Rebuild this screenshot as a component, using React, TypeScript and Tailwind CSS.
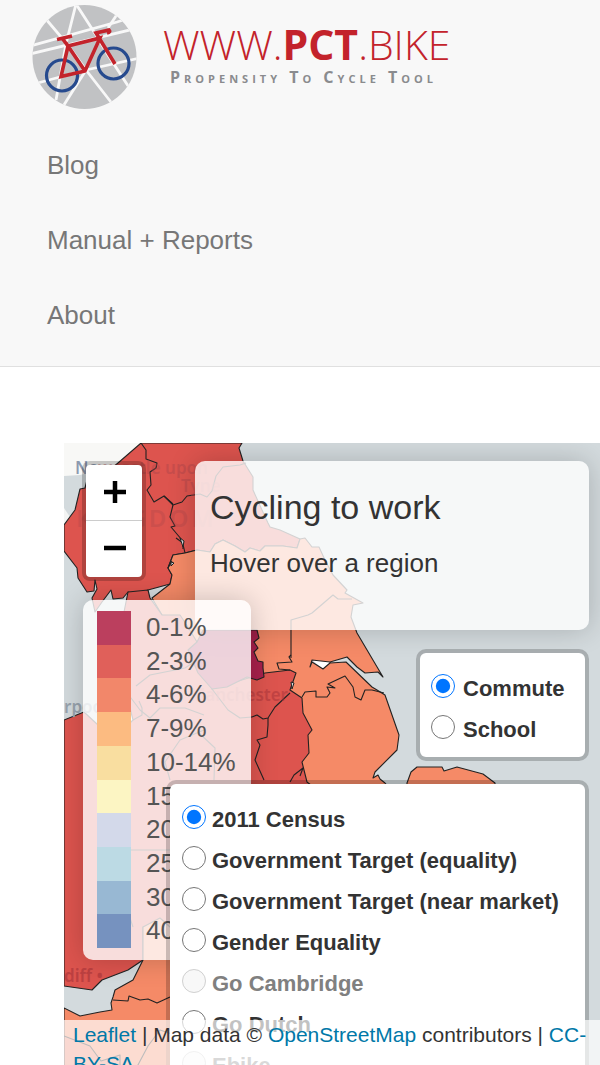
import React, { useState } from 'react';

const navLinks = ['Blog', 'Manual + Reports', 'About'];

const legendItems = [
  { label: '0-1%', color: 'bg-[#bb3f5e]' },
  { label: '2-3%', color: 'bg-[#e0605a]' },
  { label: '4-6%', color: 'bg-[#f2876a]' },
  { label: '7-9%', color: 'bg-[#fcbb81]' },
  { label: '10-14%', color: 'bg-[#f9dea0]' },
  { label: '15-19%', color: 'bg-[#fcf5c3]' },
  { label: '20-24%', color: 'bg-[#d3d9ea]' },
  { label: '25-29%', color: 'bg-[#bcdae4]' },
  { label: '30-39%', color: 'bg-[#98b8d3]' },
  { label: '40%+', color: 'bg-[#7692bf]' },
];

const purposes = [{ label: 'Commute' }, { label: 'School' }];

const scenarios = [
  { label: '2011 Census' },
  { label: 'Government Target (equality)' },
  { label: 'Government Target (near market)' },
  { label: 'Gender Equality' },
  { label: 'Go Cambridge', disabled: true },
  { label: 'Go Dutch' },
  { label: 'Ebike', disabled: true },
];

const LogoMark = () => (
  <svg viewBox="0 0 130 120" className="w-[130px] h-[120px]" aria-hidden="true">
    <defs>
      <clipPath id="disc">
        <circle cx="64.5" cy="57" r="52" />
      </clipPath>
    </defs>
    <circle cx="64.5" cy="57" r="52" fill="#c1c2c4" />
    <g clipPath="url(#disc)" stroke="#f8f8f8" strokeWidth="2.8" fill="none">
      <path d="M10 46L97 22L116 16" />
      <path d="M10 54L118 28" />
      <path d="M56 4L46 44L36 100" />
      <path d="M56 4L76 35L88 55L112 92" />
      <path d="M25 18L48 45L66 70L94 106" />
      <path d="M100 10L88 28" />
      <path d="M14 84L66 70L120 58" />
      <path d="M66 70L42 108" />
    </g>
    <g fill="none" stroke="#264a8e" strokeWidth="3.2">
      <circle cx="42" cy="75.500" r="15.500" />
      <circle cx="93.500" cy="63.500" r="15.500" />
    </g>
    <path
      d="M37 39.500L52 36M42 38L48 46L80 38L65 71L41 76.500L48 46L65 71M95 64L76 33L89 30Q91 32 87 33"
      fill="none"
      stroke="#c3232b"
      strokeWidth="3.6"
    />
  </svg>
);

const Logo = () => (
  <a href="#home" className="flex h-[128px] pl-5">
    <LogoMark />
    <span className="flex flex-col pt-[22px] pl-[13px] font-['Open_Sans',sans-serif]">
      <span className="text-[41px] leading-[44px] font-light text-[#c3232b] whitespace-nowrap">
        WWW.<b className="font-bold">PCT</b>.BIKE
      </span>
      <span className="pl-[7px] text-[16px] leading-[22px] font-bold text-[#8a8b8e] tracking-[4px] whitespace-nowrap [font-variant:small-caps]">
        Propensity To Cycle Tool
      </span>
    </span>
  </a>
);

const RegionMap = () => (
  <svg
    viewBox="64 443 536 635"
    preserveAspectRatio="xMinYMin slice"
    className="absolute inset-0 w-full h-full bg-[#d3dadd]"
    aria-hidden="true"
  >
    {/* base map land */}
    <path d="M64 443H170V500L120 490L100 470L80 475L64 476Z" fill="#f8f8f6" />
    <path d="M64 508L72 520L64 530Z" fill="#f3f4f3" />
    <path d="M84 712L104 730L112 700L135 718L130 740L90 735Z" fill="#f8f8f6" />
    <path d="M311 659L332 662L323 669Z" fill="#fff" />

    <g stroke="#222" strokeWidth="1.100" strokeLinejoin="round">
      {/* north west and north east */}
      <path
        fill="#dd544e"
        d="M141 443H242L239 448L243 461L253 477V490L262 510L268 523L270 527L280 530L300 539L297 548L283 546H265L260 551L250 548L245 552L235 546L223 540L215 544L210 552L197 550L185 553L173 555L168 568L172 575L170 584L148 590L140 596L128 592L123 598L113 599L111 590L102 602L95 612L92 598L97 589L95 580L94 591L87 592L78 578L77 568L64 551V525L75 510L80 489L85 488L88 476L104 475L118 463Z"
      />
      {/* yorkshire */}
      <path
        fill="#f58a67"
        d="M185 553L197 550L210 552L215 544L223 540L235 546L245 552L250 548L260 551L265 546H283L297 548L300 539L305 538L312 547H319L325 560L333 575L347 590L345 593L363 603L353 605L351 617L357 633L383 677L378 672L365 673L357 667L347 657L330 662L312 660L310 667L312 662L323 669L330 663L346 662L372 687L377 690L385 695L399 735L397 750L375 772L373 778L378 775L380 779L385 783L400 800H255L150 660L162 615L152 598L170 584L172 575L168 568L173 555Z"
      />
      {/* north west down to the midlands */}
      <path
        fill="#dd544e"
        d="M128 592L148 590L150 598L162 615L180 615L188 627L197 642L212 689L265 673L290 670L296 673L290 690L302 698L303 713L312 730L308 735L309 753L302 762L307 782L330 800V930L143 927L143 960L128 970L102 980L92 990L64 986V720L84 712L98 725L115 738L133 720L128 700L108 670L105 653L110 630L123 617Z"
      />
      <path
        fill="#a8214c"
        d="M203 630L257 630L259 638L254 642L258 648L254 652L258 661L263 662V668L264 677L257 680L247 677L227 687L212 689L198 673L188 650L197 642Z"
      />
      {/* east anglia */}
      <path fill="#f58a67" d="M407 783L411 772L417 767H442L444 771L457 767L483 774L495 783V1000H407Z" />
      {/* south west */}
      <path
        fill="#f58a67"
        d="M143 927L160 918L170 927H330V1080H64V1008L80 1016L100 1012L112 1010L111 1003L113 997L115 990L133 980L143 960Z"
      />
      <path fill="#e97d66" d="M64 1036L90 1046L101 1061L120 1055V1080H64Z" />
    </g>

    {/* inner boundaries */}
    <g fill="none" stroke="#222" strokeWidth="1.100" strokeLinejoin="round">
      <path d="M141 443L146 450V459L157 463L156 468L150 472L151 485L147 490L154 502L164 496L173 505L182 502L187 496L200 494L207 497L212 491L216 476L223 467L240 465L246 463" />
      <path d="M173 505L170 517L175 526L171 527L182 540L185 553" />
      <path d="M164 496L173 504M176 538L183 543V549M172 561L168 568" />
      <path d="M291 658V620L308 615L312 613L333 595L338 599L352 599" />
      <path d="M291 655L289 657L292 662L277 663L279 669L290 670" />
      <path d="M302 697L305 692L316 691V697L327 697L330 693L327 687L335 688L328 684L345 676L353 687L355 697L361 700L365 690H372L384 693" />
      <path d="M252 717L257 715L263 719L268 718L275 707L290 693" />
      <path d="M268 718V725L267 737L257 740L260 745L255 760L264 780" />
      <path d="M290 782L294 775L303 768L300 776" />
      <path d="M105 653L118 665L125 690L140 710L150 718L160 708H185L204 715" />
      <path d="M136 686L150 675L185 668L197 660" />
      <path d="M212 689L228 710L240 718L252 717" />
      <path d="M133 720L142 715V708L139 701" />
      <path d="M199 733L215 748L214 780M170 780L165 762L180 740L204 730" />
      <path d="M112 740L118 765L106 800L98 840L108 845L130 850L170 850" />
      <path d="M105 850L112 870L106 900L130 918L133 927" />
      <path d="M113 1000L128 1001L129 996L140 1000L148 999L157 1003L170 997" />
      <path d="M130 1080L148 1046L160 1030L175 1035" />
    </g>
    <path d="M180 538L184 541L183 547ZM171 562L174 563L171 566ZM291 682L292 689L294 683Z" fill="#d3dadd" stroke="#222" />

    {/* place names showing through the fills */}
    <g fontFamily="'Noto Sans', sans-serif" fontWeight="600">
      <text x="75" y="474" fontSize="17" fill="#8d9ab0">Ne</text>
      <text x="98" y="474" fontSize="17" fill="#a8444a" opacity=".4">wcastle upon</text>
      <text x="181" y="492" fontSize="17" fill="#a8444a" opacity=".4">Tyne</text>
      <text x="76" y="527" fontSize="24" letterSpacing="3" fill="#a8444a" opacity=".3">KINGDOM</text>
      <text x="64" y="713" fontSize="17" fill="#98a3ad">rpool</text>
      <text x="288" y="701" fontSize="17" textAnchor="end" fill="#a8343a" opacity=".5">Manchester</text>
      <text x="64" y="982" fontSize="17" fill="#a8343a" opacity=".6">diff •</text>
    </g>
  </svg>
);

interface RadioPanelProps {
  name: string;
  items: { label: string; disabled?: boolean }[];
  className: string;
  gap: string;
}

const RadioPanel = ({ name, items, className, gap }: RadioPanelProps) => {
  const [selected, setSelected] = useState(items[0].label);
  return (
    <fieldset
      className={`relative z-30 flex flex-col pt-[15px] pb-[7px] bg-white bg-clip-padding border-4 border-black/20 rounded-[10px] ${className}`}
    >
      {items.map((item) => (
        <label
          key={item.label}
          className={`flex items-center h-[41px] text-[22px] font-bold whitespace-nowrap ${gap} ${
            item.disabled ? 'text-[#808080]' : 'text-[#333]'
          }`}
        >
          <input
            type="radio"
            name={name}
            className="w-6 h-6 mb-1.5 shrink-0"
            checked={selected === item.label}
            disabled={item.disabled}
            onChange={() => setSelected(item.label)}
          />
          {item.label}
        </label>
      ))}
    </fieldset>
  );
};

const ZoomControl = () => (
  <div className="flex flex-col ml-[-1px] overflow-hidden bg-white bg-clip-padding border-4 border-black/20 rounded-lg w-16">
    <button aria-label="Zoom in" className="flex items-center justify-center pb-0.5 pl-0.5 border-b border-[#ccc] h-14">
      <svg viewBox="0 0 22 22" className="w-[22px] h-[22px]">
        <path d="M11 0V22M0 11H22" stroke="#000" strokeWidth="4.500" />
      </svg>
    </button>
    <button aria-label="Zoom out" className="flex items-center justify-center pb-0.5 pl-0.5 h-14">
      <svg viewBox="0 0 22 22" className="w-[22px] h-[22px]">
        <path d="M0 11H22" stroke="#000" strokeWidth="4.500" />
      </svg>
    </button>
  </div>
);

const Legend = () => (
  <ul className="relative z-20 flex flex-col w-[168px] h-[360px] pt-[11px] pb-3 px-3.5 bg-white/80 rounded-[10px] shadow-[0_0_28px_rgba(0,0,0,0.2)]">
    {legendItems.map((item) => (
      <li key={item.label} className="flex items-stretch flex-1 gap-[15px] text-[26px] leading-[33px] text-[#555]">
        <span className={`w-[34px] shrink-0 ${item.color}`} />
        <span className="whitespace-nowrap">{item.label}</span>
      </li>
    ))}
  </ul>
);

const App = () => (
  <div className="flex flex-col h-screen overflow-hidden bg-white font-['Liberation_Sans',Arial,sans-serif]">
    <header className="shrink-0 bg-[#f8f8f8] border-b border-[#e0e0e0] pb-[13px]">
      <Logo />
      <nav>
        <ul>
          {navLinks.map((link) => (
            <li key={link}>
              <a href="#top" className="block pl-[47px] text-[26px] leading-[75px] text-[#777]">
                {link}
              </a>
            </li>
          ))}
        </ul>
      </nav>
    </header>

    <main className="relative flex-1 min-h-[635px] mt-[76px] ml-16 overflow-hidden">
      <RegionMap />

      <div className="absolute left-[19px] top-[18px] flex flex-col gap-[19px]">
        <ZoomControl />
        <Legend />
      </div>

      <div className="absolute right-[11px] top-[18px] flex flex-col items-end gap-[19px]">
        <section className="relative z-10 w-[394px] h-[169px] px-[15px] pt-[26px] bg-white/80 rounded-[10px] shadow-[0_0_28px_rgba(0,0,0,0.2)] text-[#333]">
          <h4 className="text-[34px] leading-[40px]">Cycling to work</h4>
          <p className="pt-[18px] text-[26px] leading-[36px]">Hover over a region</p>
        </section>
        <RadioPanel name="purpose" items={purposes} className="w-[173px] pl-[11px]" gap="gap-2" />
        <RadioPanel name="scenario" items={scenarios} className="w-[423px] pl-3" gap="gap-1.5" />
      </div>

      <footer className="absolute inset-x-0 bottom-0 z-40 px-[9px] bg-white/70 text-[21px] leading-[29px] text-[#333]">
        <a href="#leaflet" className="text-[#0078a8]">Leaflet</a> | Map data ©{' '}
        <a href="#osm" className="text-[#0078a8]">OpenStreetMap</a> contributors |{' '}
        <a href="#licence" className="text-[#0078a8]">CC-BY-SA</a>
      </footer>
    </main>
  </div>
);

export default App;
